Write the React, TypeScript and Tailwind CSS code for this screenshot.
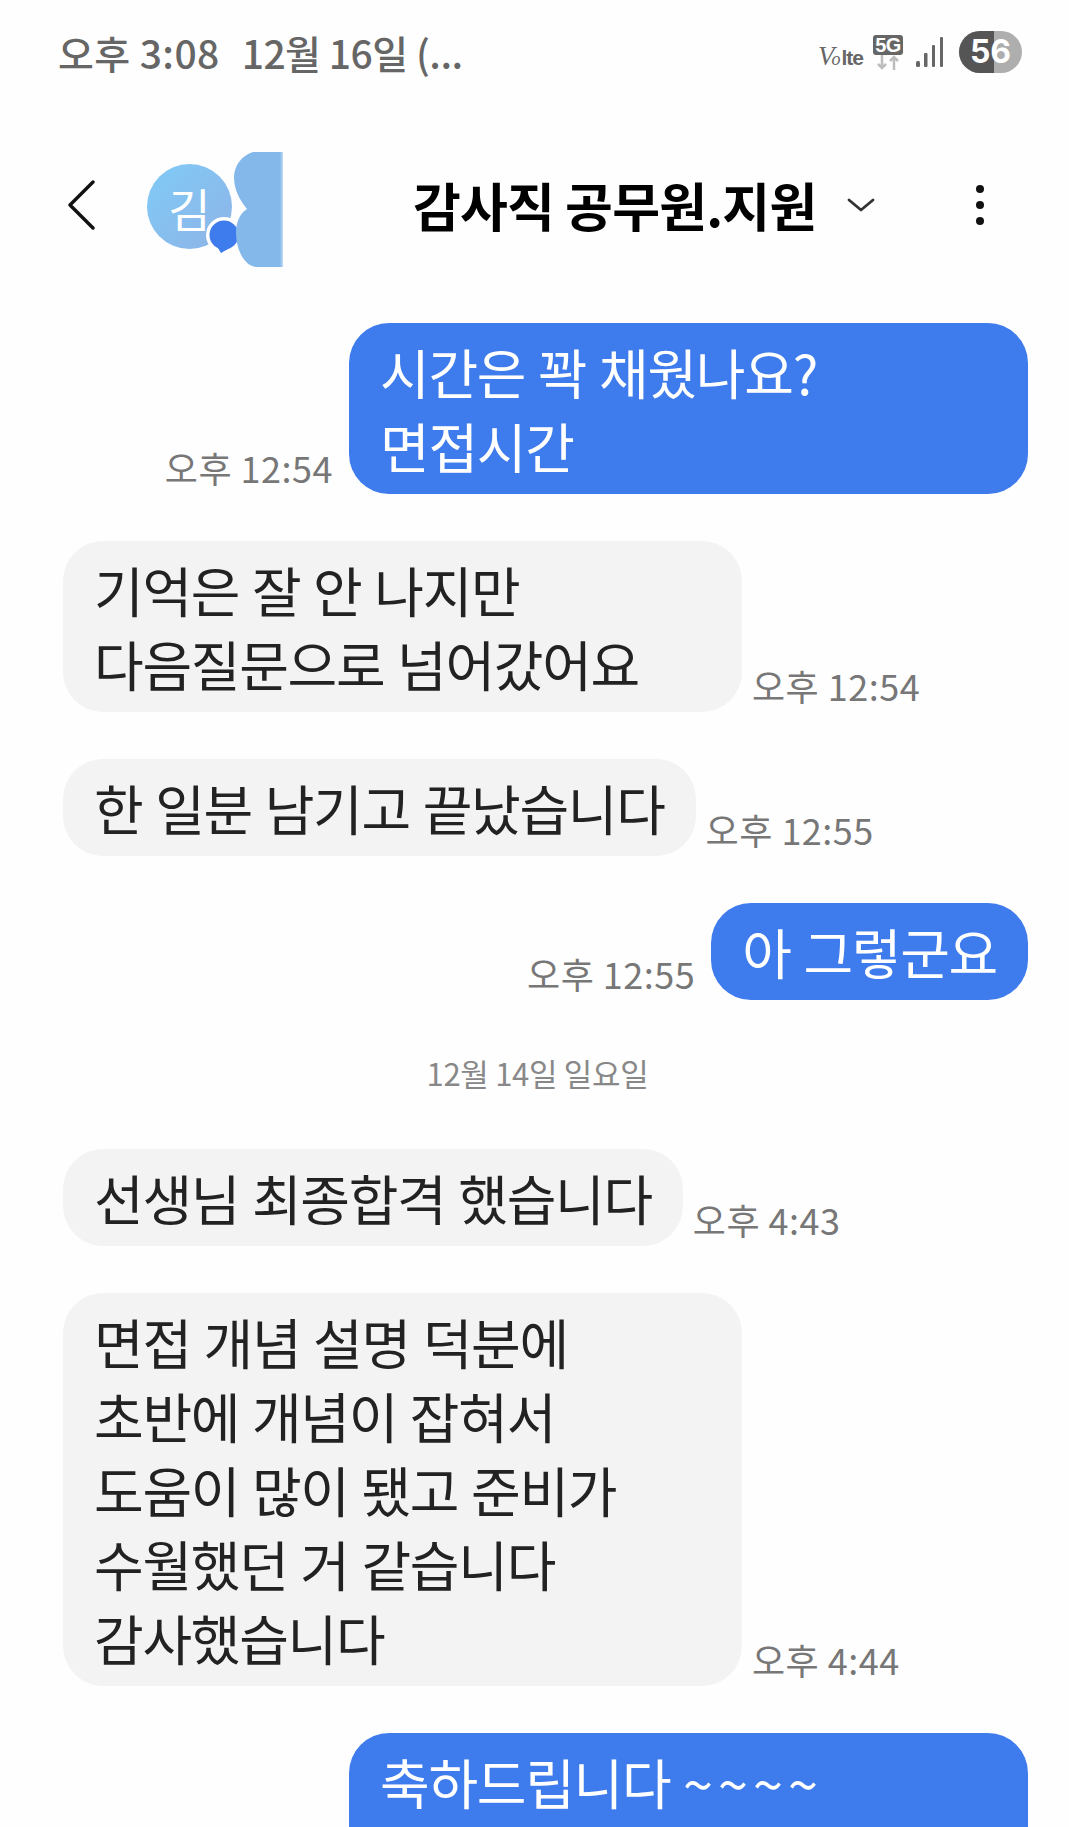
import React from "react";

function Out({ lines, time, wide }: { lines: string[]; time: string; wide?: boolean }) {
  return (
    <div className="flex items-end justify-end gap-[16px] pr-[41px]">
      <span className="pb-[7px] text-[36px] leading-[40px] tracking-[0.5px] text-[#777777]">{time}</span>
      <div className={`rounded-[40px] bg-[#3e7bec] px-[31px] py-[11.5px] text-[54px] leading-[74px] tracking-[-1.3px] [word-spacing:2px] text-white ${wide ? "w-[679px]" : ""}`}>
        {lines.map((l) => (
          <div key={l}>{l}</div>
        ))}
      </div>
    </div>
  );
}

function In({ lines, time, wide }: { lines: string[]; time: string; wide?: boolean }) {
  return (
    <div className="flex items-end gap-[10px] pl-[63px]">
      <div className={`rounded-[40px] bg-[#f3f3f3] px-[31px] py-[11.5px] text-[54px] leading-[74px] tracking-[-1.3px] [word-spacing:2px] text-[#222222] ${wide ? "w-[679px]" : ""}`}>
        {lines.map((l) => (
          <div key={l}>{l}</div>
        ))}
      </div>
      <span className="pb-[7px] text-[36px] leading-[40px] tracking-[0.5px] text-[#777777]">{time}</span>
    </div>
  );
}

export default function App() {
  return (
    <div className="h-[1827px] w-[1069px] overflow-hidden bg-[#fefefe] font-['Noto_Sans_CJK_KR',sans-serif]">
      {/* status bar */}
      <div className="flex h-[104px] items-center justify-between pl-[58px] pr-[47px]">
        <div className="flex items-center gap-[22px] text-[39px] font-medium text-[#666666]">
          <span className="tracking-[0.4px]">오후 3:08</span>
          <span className="tracking-[-0.5px]">12월 16일 (...</span>
        </div>
        <div className="flex items-center">
          <span className="mt-[8px] flex items-baseline font-['Liberation_Sans'] text-[#666666]">
            <span className="font-['Liberation_Serif'] text-[27px] italic leading-none">V</span>
            <span className="ml-[-3px] font-['Liberation_Serif'] text-[18px] italic leading-none">o</span>
            <span className="ml-[1px] text-[21px] font-bold leading-none tracking-[-1px]">lte</span>
          </span>
          <div className="ml-[10px] flex w-[30px] flex-col items-center">
            <span className="flex h-[20px] w-[30px] items-center justify-center rounded-[3px] bg-[#666666] font-['Liberation_Sans'] text-[20px] font-bold tracking-[-0.5px] text-white">5G</span>
            <svg width="24" height="15" viewBox="0 0 24 15" fill="none" stroke="#bdbdbd" strokeWidth="2.5">
              <path d="M6 0V13M2 9l4 4 4-4" />
              <path d="M18 15V2M14 6l4-4 4 4" />
            </svg>
          </div>
          <svg className="ml-[13px]" width="28" height="30" viewBox="0 0 28 30" fill="#666666">
            <rect x="0" y="24" width="4" height="6" rx="1.5" />
            <rect x="8" y="16" width="3.5" height="14" rx="1" />
            <rect x="16" y="8" width="3" height="22" rx="1" />
            <rect x="24" y="0" width="3" height="30" rx="1" />
          </svg>
          <div className="relative ml-[15px] flex h-[42px] w-[63px] items-center justify-center overflow-hidden rounded-full bg-[#aeaeae]">
            <div className="absolute inset-y-0 left-0 w-[35px] bg-[#555555]" />
            <span className="relative font-['Inter'] text-[32px] font-bold leading-none text-white">56</span>
          </div>
        </div>
      </div>

      {/* header */}
      <div className="relative flex h-[202px] items-center">
        <svg className="ml-[67px]" width="30" height="50" viewBox="0 0 30 50" fill="none" stroke="#111111" strokeWidth="3.4" strokeLinecap="round" strokeLinejoin="round">
          <path d="M26 2 3 25l23 23" />
        </svg>
        <div className="relative ml-[50px] mt-[10px] h-[116px] w-[137px]">
          <div className="absolute left-0 top-[12px] flex h-[85px] w-[85px] items-center justify-center rounded-full bg-gradient-to-br from-[#7fcbf7] to-[#8db3e6] text-[46px] leading-none text-white">
            김
          </div>
          <svg className="absolute left-[57px] top-[63px]" width="40" height="42" viewBox="0 0 40 42">
            <circle cx="20" cy="20" r="18" fill="#ffffff" />
            <circle cx="20" cy="20" r="14.5" fill="#3e7bec" />
            <path d="M14 33 17 38 24 34z" fill="#3e7bec" />
          </svg>
          <svg className="absolute left-[87px] top-0" width="50" height="116" viewBox="0 0 50 116">
            <defs>
              <linearGradient id="fade" x1="0" x2="1" y1="0" y2="0">
                <stop offset="0.94" stopColor="#85b8ea" />
                <stop offset="1" stopColor="#c5dcf4" />
              </linearGradient>
            </defs>
            <path d="M49 0H19C8 3 0 14 0 25c0 12 5 22 13 32C5 62 2 72 2 80c0 20 10 35 21 35h26z" fill="url(#fade)" />
          </svg>
        </div>
        <span className="ml-[129px] text-[52px] font-bold leading-none tracking-[-0.8px] text-black">감사직 공무원.지원</span>
        <svg className="ml-[31px]" width="28" height="14" viewBox="0 0 28 14" fill="none" stroke="#333333" strokeWidth="2.8" strokeLinecap="round" strokeLinejoin="round">
          <path d="M2 2 14 12 26 2" />
        </svg>
        <div className="ml-[101px] flex flex-col gap-[8px]">
          <span className="h-[8px] w-[8px] rounded-full bg-[#111111]" />
          <span className="h-[8px] w-[8px] rounded-full bg-[#111111]" />
          <span className="h-[8px] w-[8px] rounded-full bg-[#111111]" />
        </div>
      </div>

      {/* messages */}
      <div className="flex flex-col gap-[47px] pt-[17px]">
        <Out wide lines={["시간은 꽉 채웠나요?", "면접시간"]} time="오후 12:54" />
        <In wide lines={["기억은 잘 안 나지만", "다음질문으로 넘어갔어요"]} time="오후 12:54" />
        <In lines={["한 일분 남기고 끝났습니다"]} time="오후 12:55" />
        <Out lines={["아 그렇군요"]} time="오후 12:55" />
        <div className="mb-[5px] mt-[2px] pl-[6px] text-center text-[31px] leading-[48px] tracking-[-0.3px] text-[#888888]">12월 14일 일요일</div>
        <In lines={["선생님 최종합격 했습니다"]} time="오후 4:43" />
        <In wide lines={["면접 개념 설명 덕분에", "초반에 개념이 잡혀서", "도움이 많이 됐고 준비가", "수월했던 거 같습니다", "감사했습니다"]} time="오후 4:44" />
        <div className="flex justify-end pr-[41px]">
          <div className="h-[171px] w-[679px] rounded-[40px] bg-[#3e7bec] px-[31px] py-[11.5px] text-[54px] leading-[74px] tracking-[-1.3px] [word-spacing:2px] text-white">
            축하드립니다 <span className="tracking-[5px]">~~~~</span>
          </div>
        </div>
      </div>
    </div>
  );
}
